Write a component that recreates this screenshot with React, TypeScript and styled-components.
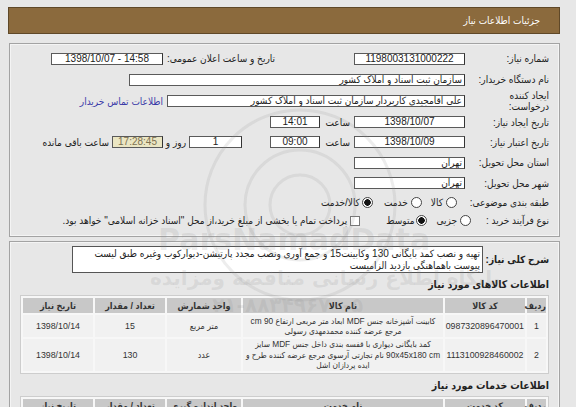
import styled, { createGlobalStyle } from "styled-components";

const colors = {
  page: "#e7e7e7",
  header: "#8b6a3d",
  headerBorder: "#5f4828",
  panelBorder: "#a3a3a3",
  fieldBorder: "#5a5a5a",
  text: "#222",
  link: "#3a3aa8",
  timerBg: "#ebe6c3",
  timerText: "#7d7150",
  th: "#c8c8c8",
  td: "#f1f1f1",
};

const GlobalStyle = createGlobalStyle`
  html, body {
    margin: 0;
    padding: 0;
    background: ${colors.page};
  }
  body {
    font-family: "Liberation Sans", "DejaVu Sans Condensed", "DejaVu Sans", sans-serif;
    font-size: 10px;
    color: ${colors.text};
  }
`;

const Page = styled.div`
  direction: rtl;
  position: relative;
  width: 576px;
  height: 407px;
  overflow: hidden;
  padding: 7px 16px 0 8px;
  box-sizing: border-box;
`;

const TitleBar = styled.div`
  height: 27px;
  background: ${colors.header};
  border: 1px solid ${colors.headerBorder};
  box-sizing: border-box;
  color: #fff;
  display: flex;
  align-items: center;
  padding-right: 19px;
  font-size: 10px;
`;

const Panel = styled.div<{ $mt: number }>`
  margin-top: ${(p) => p.$mt}px;
  margin-left: 1px;
  border: 1px solid ${colors.panelBorder};
  box-shadow: inset 0 0 0 1px #f4f4f4;
  padding: 4px 10px 6px 10px;
`;

const Row = styled.div<{ $h: number }>`
  display: flex;
  align-items: center;
  height: ${(p) => p.$h}px;
  white-space: nowrap;
`;

const Label = styled.div<{ $w?: number; $bold?: boolean }>`
  width: ${(p) => p.$w ?? 84}px;
  flex: none;
  line-height: 11px;
  white-space: nowrap;
  font-weight: ${(p) => (p.$bold ? "bold" : "normal")};
  font-size: 10px;
`;

const Text = styled.span<{ $w?: number; $mr?: number; $pr?: number }>`
  flex: none;
  width: ${(p) => (p.$w ? `${p.$w}px` : "auto")};
  margin-right: ${(p) => p.$mr ?? 0}px;
  padding-right: ${(p) => p.$pr ?? 0}px;
  box-sizing: border-box;
`;

const Field = styled.div<{ $w: number; $mr?: number; $center?: boolean; $timer?: boolean }>`
  flex: none;
  width: ${(p) => p.$w}px;
  height: 12px;
  margin-right: ${(p) => p.$mr ?? 0}px;
  box-sizing: border-box;
  border: 1px solid ${colors.fieldBorder};
  border-right-color: #333;
  background: ${(p) => (p.$timer ? colors.timerBg : "#fff")};
  color: ${(p) => (p.$timer ? colors.timerText : colors.text)};
  text-align: ${(p) => (p.$center ? "center" : "right")};
  padding: 0 2px;
  line-height: 10px;
  font-size: 10px;
  overflow: hidden;
  white-space: nowrap;
`;

const Link = styled.span`
  color: ${colors.link};
  margin-right: 4px;
`;

const Radio = styled.span<{ $checked?: boolean; $mr?: number }>`
  flex: none;
  width: 11px;
  height: 11px;
  margin-right: ${(p) => p.$mr ?? 0}px;
  border: 1px solid #444;
  border-radius: 50%;
  box-sizing: border-box;
  background: ${(p) =>
    p.$checked ? "radial-gradient(circle, #111 0 3px, #fff 3.5px)" : "#fff"};
`;

const Check = styled.span<{ $mr?: number }>`
  flex: none;
  width: 10px;
  height: 10px;
  margin-right: ${(p) => p.$mr ?? 0}px;
  border: 1px solid #777;
  background: #fff;
  box-sizing: border-box;
`;

const TextArea = styled.div`
  width: 411px;
  height: 27px;
  box-sizing: border-box;
  border: 1px solid #555;
  background: #fff;
  padding: 1px 2px;
  line-height: 12px;
  font-size: 10px;
  overflow: hidden;
`;

const DescRow = styled.div`
  display: flex;
  align-items: center;
`;

const SectionTitle = styled.div<{ $mt: number }>`
  margin-top: ${(p) => p.$mt}px;
  font-weight: bold;
  font-size: 10.5px;
  line-height: 14px;
`;

const Table = styled.table`
  margin-top: 4px;
  margin-left: 1px;
  width: 526px;
  table-layout: fixed;
  border: 1px solid #cdcdcd;
  border-spacing: 2px;
  background: #f7f7f7;
  font-size: 9px;
`;

const Th = styled.th`
  background: ${colors.th};
  height: 15px;
  padding: 0;
  font-weight: bold;
  font-size: 9px;
  color: #333;
  text-align: center;
`;

const Td = styled.td<{ $h?: number; $small?: boolean }>`
  background: ${colors.td};
  height: ${(p) => p.$h ?? 20}px;
  padding: 0 1px;
  text-align: center;
  line-height: 10.5px;
  font-size: ${(p) => (p.$small ? "8.3px" : "8.8px")};
  color: #333;
  white-space: nowrap;
  overflow: hidden;
`;

const Watermark = styled.div`
  position: absolute;
  inset: 0;
  pointer-events: none;
  color: rgba(140, 140, 140, 0.17);
  direction: ltr;
`;

const WmText = styled.div<{ $top: number; $left: number; $size: number }>`
  position: absolute;
  top: ${(p) => p.$top}px;
  left: ${(p) => p.$left}px;
  font-size: ${(p) => p.$size}px;
  font-weight: bold;
  font-family: "DejaVu Sans", sans-serif;
  white-space: nowrap;
`;

const cols = [19, 80, 200, 74, 70, 70];

function Cols() {
  return (
    <colgroup>
      {cols.map((w, i) => (
        <col key={i} style={{ width: w }} />
      ))}
    </colgroup>
  );
}

export default function App() {
  return (
    <>
      <GlobalStyle />
      <Page>
        <TitleBar>جزئیات اطلاعات نیاز</TitleBar>

        <Panel $mt={9}>
          <Row $h={21}>
            <Label>شماره نیاز:</Label>
            <Field $w={111} $center>1198003131000222</Field>
            <Text $w={112} $mr={79}>تاریخ و ساعت اعلان عمومی:</Text>
            <Field $w={112} $center dir="ltr">1398/10/07 - 14:58</Field>
          </Row>
          <Row $h={21}>
            <Label>نام دستگاه خریدار:</Label>
            <Field $w={336}>سازمان ثبت اسناد و املاک کشور</Field>
          </Row>
          <Row $h={22}>
            <Label>
              ایجاد کننده
              <br />
              درخواست:
            </Label>
            <Field $w={298}>علی آقامجیدی کاربردار سازمان ثبت اسناد و املاک کشور</Field>
            <Link>اطلاعات تماس خریدار</Link>
          </Row>
          <Row $h={20}>
            <Label>تاریخ ایجاد نیاز:</Label>
            <Field $w={111} $center>1398/10/07</Field>
            <Text $w={34} $pr={4}>ساعت</Text>
            <Field $w={50} $center>14:01</Field>
          </Row>
          <Row $h={20}>
            <Label>تاریخ اعتبار نیاز:</Label>
            <Field $w={111} $center>1398/10/09</Field>
            <Text $w={34} $pr={4}>ساعت</Text>
            <Field $w={50} $center>09:00</Field>
            <Field $w={53} $mr={28} $center>1</Field>
            <Text $w={26} $pr={3}>روز و</Text>
            <Field $w={51} $center $timer>17:28:45</Field>
            <Text $pr={3}>ساعت باقی مانده</Text>
          </Row>
          <Row $h={21}>
            <Label>استان محل تحویل:</Label>
            <Field $w={111}>تهران</Field>
          </Row>
          <Row $h={20}>
            <Label>شهر محل تحویل:</Label>
            <Field $w={111}>تهران</Field>
          </Row>
          <Row $h={18}>
            <Label>طبقه بندی موضوعی:</Label>
            <Radio $mr={8} />
            <Text $mr={3}>کالا</Text>
            <Radio $mr={9} />
            <Text $mr={3}>خدمت</Text>
            <Radio $mr={11} $checked />
            <Text $mr={2}>کالا/خدمت</Text>
          </Row>
          <Row $h={19}>
            <Label $w={78}>نوع فرآیند خرید :</Label>
            <Radio />
            <Text $mr={3}>جزیی</Text>
            <Radio $mr={9} $checked />
            <Text $mr={2}>متوسط</Text>
            <Check $mr={26} />
            <Text $mr={3}>
              پرداخت تمام یا بخشی از مبلغ خرید،از محل "اسناد خزانه اسلامی" خواهد بود.
            </Text>
          </Row>
        </Panel>

        <Panel $mt={4}>
          <DescRow>
            <Label $w={66} $bold>
              شرح کلی نیاز:
            </Label>
            <TextArea>
              تهیه و نصب کمد بایگانی 130 وکابینت15 و جمع آوری ونصب مجدد پارتیشن-دیوارکوب وغیره طبق لیست
              پیوست باهماهنگی بازدید الزامیست
            </TextArea>
          </DescRow>

          <SectionTitle $mt={4}>اطلاعات کالاهای مورد نیاز</SectionTitle>
          <Table>
            <Cols />
            <thead>
              <tr>
                <Th>ردیف</Th>
                <Th>کد کالا</Th>
                <Th>نام کالا</Th>
                <Th>واحد شمارش</Th>
                <Th>تعداد / مقدار</Th>
                <Th>تاریخ نیاز</Th>
              </tr>
            </thead>
            <tbody>
              <tr>
                <Td $h={22}>1</Td>
                <Td>0987320896470001</Td>
                <Td $small>
                  کابینت آشپزخانه جنس MDF ابعاد متر مربعی ارتفاع 90 cm
                  <br />
                  مرجع عرضه کننده محمدمهدی رسولی
                </Td>
                <Td>متر مربع</Td>
                <Td>15</Td>
                <Td>1398/10/14</Td>
              </tr>
              <tr>
                <Td $h={31}>2</Td>
                <Td>1113100928460002</Td>
                <Td $small>
                  کمد بایگانی دیواری با قفسه بندی داخل جنس MDF سایز
                  <br />
                  90x45x180 cm نام تجارتی آرسوی مرجع عرضه کننده طرح و
                  <br />
                  ایده پردازان اشل
                </Td>
                <Td>عدد</Td>
                <Td>130</Td>
                <Td>1398/10/14</Td>
              </tr>
            </tbody>
          </Table>

          <SectionTitle $mt={4}>اطلاعات خدمات مورد نیاز</SectionTitle>
          <Table>
            <Cols />
            <thead>
              <tr>
                <Th>ردیف</Th>
                <Th>کد خدمت</Th>
                <Th>نام خدمت</Th>
                <Th>واحد اندازه گیری</Th>
                <Th>تعداد / مقدار</Th>
                <Th>تاریخ نیاز</Th>
              </tr>
            </thead>
          </Table>
        </Panel>

        <Watermark>
          <svg width="576" height="407" style={{ position: "absolute", top: 0, left: 0 }}>
            <g fill="none" stroke="rgba(140,140,140,0.16)" strokeWidth="3">
              <circle cx="300" cy="205" r="95" />
              <circle cx="300" cy="205" r="55" />
              <circle cx="300" cy="205" r="30" />
            </g>
          </svg>
          <WmText $top={222} $left={158} $size={30}>ParsNamadData</WmText>
          <WmText $top={266} $left={150} $size={20}>پایگاه اطلاع رسانی مناقصه ومزایده</WmText>
          <WmText $top={293} $left={200} $size={20}>۰۲۱-۸۸۳۴۹۶۷۰-۵</WmText>
        </Watermark>
      </Page>
    </>
  );
}
